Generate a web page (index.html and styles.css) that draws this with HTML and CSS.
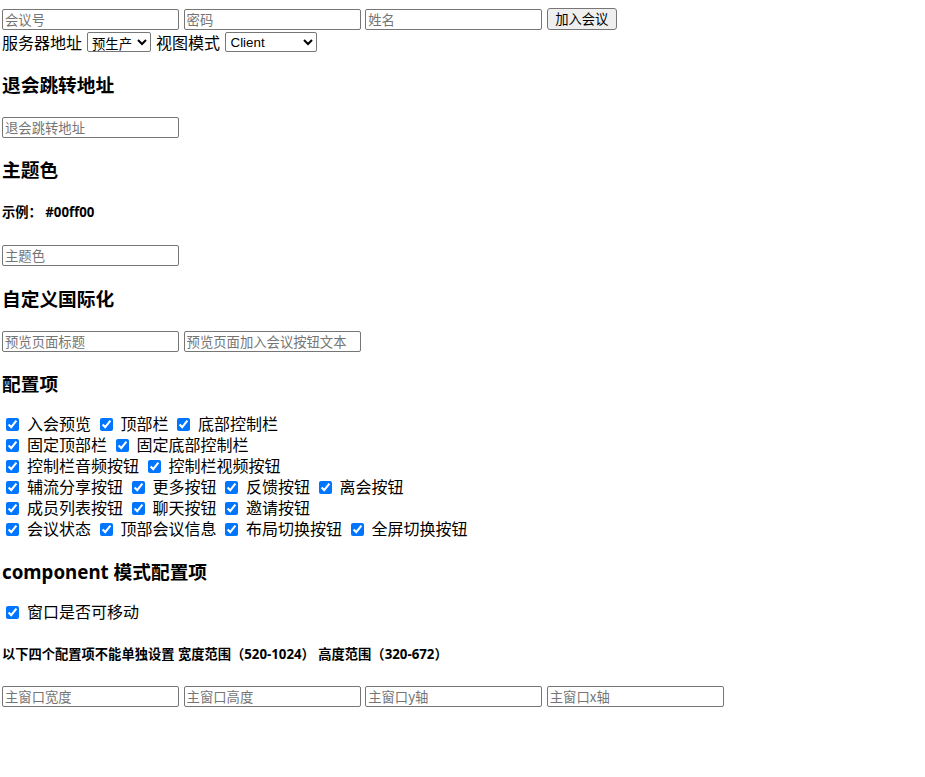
FILE: index.html
```html
<!DOCTYPE html>
<html lang="zh-CN">
<head>
<meta charset="utf-8">
<title>会议</title>
<link rel="stylesheet" href="styles.css">
</head>
<body>
<div class="page">
  <div class="row-top">
    <input class="field" placeholder="会议号">
    <input class="field" placeholder="密码">
    <input class="field" placeholder="姓名">
    <button class="btn">加入会议</button>
  </div>
  <div class="row-sel">
    <span>服务器地址</span>
    <select class="sel sel-env"><option>预生产</option></select>
    <span>视图模式</span>
    <select class="sel sel-mode"><option>Client</option></select>
  </div>

  <h3 class="title">退会跳转地址</h3>
  <div class="inrow"><input class="field" placeholder="退会跳转地址"></div>

  <h3 class="title">主题色</h3>
  <h5 class="sub">示例： #00ff00</h5>
  <div class="inrow"><input class="field" placeholder="主题色"></div>

  <h3 class="title">自定义国际化</h3>
  <div class="inrow">
    <input class="field" placeholder="预览页面标题">
    <input class="field" placeholder="预览页面加入会议按钮文本">
  </div>

  <h3 class="title">配置项</h3>
  <div class="cbs">
    <div class="cb-row">
      <label class="cb"><input type="checkbox" checked><span>入会预览</span></label>
      <label class="cb"><input type="checkbox" checked><span>顶部栏</span></label>
      <label class="cb"><input type="checkbox" checked><span>底部控制栏</span></label>
    </div>
    <div class="cb-row">
      <label class="cb"><input type="checkbox" checked><span>固定顶部栏</span></label>
      <label class="cb"><input type="checkbox" checked><span>固定底部控制栏</span></label>
    </div>
    <div class="cb-row">
      <label class="cb"><input type="checkbox" checked><span>控制栏音频按钮</span></label>
      <label class="cb"><input type="checkbox" checked><span>控制栏视频按钮</span></label>
    </div>
    <div class="cb-row">
      <label class="cb"><input type="checkbox" checked><span>辅流分享按钮</span></label>
      <label class="cb"><input type="checkbox" checked><span>更多按钮</span></label>
      <label class="cb"><input type="checkbox" checked><span>反馈按钮</span></label>
      <label class="cb"><input type="checkbox" checked><span>离会按钮</span></label>
    </div>
    <div class="cb-row">
      <label class="cb"><input type="checkbox" checked><span>成员列表按钮</span></label>
      <label class="cb"><input type="checkbox" checked><span>聊天按钮</span></label>
      <label class="cb"><input type="checkbox" checked><span>邀请按钮</span></label>
    </div>
    <div class="cb-row">
      <label class="cb"><input type="checkbox" checked><span>会议状态</span></label>
      <label class="cb"><input type="checkbox" checked><span>顶部会议信息</span></label>
      <label class="cb"><input type="checkbox" checked><span>布局切换按钮</span></label>
      <label class="cb"><input type="checkbox" checked><span>全屏切换按钮</span></label>
    </div>
  </div>

  <h3 class="title">component 模式配置项</h3>
  <div class="cbs">
    <div class="cb-row">
      <label class="cb"><input type="checkbox" checked><span>窗口是否可移动</span></label>
    </div>
  </div>
  <h5 class="sub">以下四个配置项不能单独设置 宽度范围（520-1024） 高度范围（320-672）</h5>
  <div class="inrow inrow-last">
    <input class="field" placeholder="主窗口宽度">
    <input class="field" placeholder="主窗口高度">
    <input class="field" placeholder="主窗口y轴">
    <input class="field" placeholder="主窗口x轴">
  </div>
</div>
</body>
</html>
```

FILE: styles.css
```css
html, body {
  margin: 0;
  padding: 0;
  background: #fff;
}
body {
  font-family: "Noto Sans", "Noto Sans CJK SC", sans-serif;
  font-size: 16px;
  line-height: 21px;
  color: #000;
}
.page {
  padding: 8px 2px 0 2px;
}
.row-top {
  display: flex;
  align-items: flex-end;
  gap: 4.6px;
  height: 22px;
  margin-bottom: 1px;
}
.field {
  box-sizing: border-box;
  width: 177px;
  height: 21px;
  margin: 0;
  padding: 1px 2px;
  border: 1px solid #767676;
  border-radius: 2px;
  font-family: "Noto Sans CJK SC", sans-serif;
  font-size: 13.33px;
  line-height: 17px;
  color: #000;
  background: #fff;
  outline: none;
}
.field::placeholder {
  color: #757575;
}
.btn {
  box-sizing: border-box;
  width: 70px;
  height: 22px;
  margin: 0;
  padding: 0 6px;
  border: 1px solid #767676;
  border-radius: 3px;
  background: #efefef;
  font-family: "Noto Sans CJK SC", sans-serif;
  font-size: 13.33px;
  line-height: 18px;
  color: #000;
}
.row-sel {
  display: flex;
  align-items: center;
  height: 22px;
}
.row-sel span {
  position: relative;
  top: 1px;
}
.sel {
  box-sizing: border-box;
  height: 20px;
  margin: 0;
  border: 1px solid #767676;
  border-radius: 2px;
  background: #fff;
  font-family: "Noto Sans CJK SC", "Liberation Sans", sans-serif;
  font-size: 13.33px;
  color: #000;
  padding: 0;
}
.sel-env {
  width: 64px;
  margin: 0 5px 0 5px;
}
.sel-mode {
  width: 92px;
  margin-left: 4.5px;
  font-family: "Liberation Sans", "Noto Sans CJK SC", sans-serif;
  padding-left: 1px;
}
.title {
  font-size: 18.72px;
  font-weight: bold;
  line-height: 23.7px;
  padding-top: 1px;
  margin: 18.72px 0;
}
.sub {
  font-size: 13.28px;
  font-weight: bold;
  line-height: 17.5px;
  margin: 22.18px 0;
}
.inrow {
  box-sizing: border-box;
  display: flex;
  align-items: flex-start;
  gap: 4.6px;
  height: 23.2px;
  padding-top: 1.6px;
}
.inrow-last {
  padding-top: 0.6px;
}
.cb-row {
  display: flex;
  align-items: center;
  height: 21px;
}
.cb {
  display: flex;
  align-items: center;
  margin-right: 4.5px;
}
.cb input {
  width: 13px;
  height: 13px;
  margin: 0 3px 0 4px;
  accent-color: #0075ff;
}
.cb span {
  margin-left: 5px;
  white-space: nowrap;
}
```
